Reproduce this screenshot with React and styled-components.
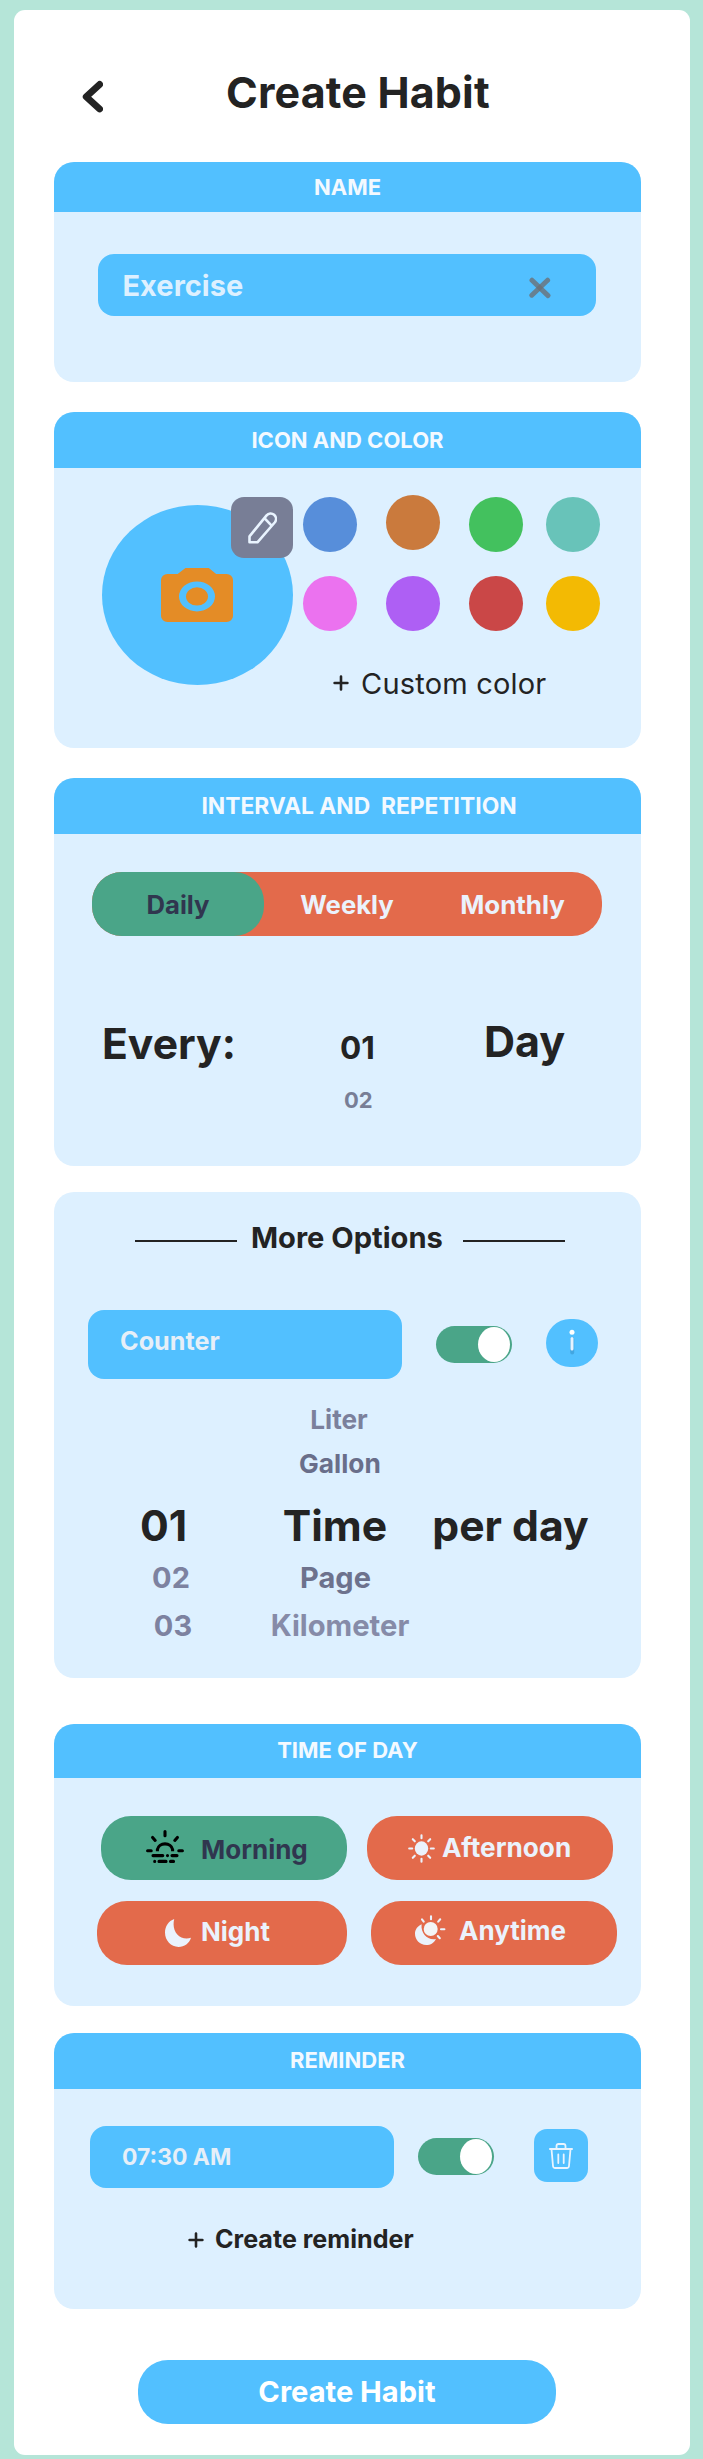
import React from 'react';
import styled, { createGlobalStyle } from 'styled-components';

const c = {
  mint: '#b5e5d8',
  blue: '#52c0ff',
  pale: '#ddf0ff',
  ink: '#232323',
  green: '#4aa588',
  coral: '#e36a4b',
  snow: '#ebf2fc',
  navy: '#30364f',
  slate: '#787e96',
};

const GlobalStyle = createGlobalStyle`
  *, *::before, *::after { box-sizing: border-box; }
  body {
    margin: 0;
    background: ${c.mint};
    color: ${c.ink};
    font-family: Inter, "Liberation Sans", sans-serif;
  }
  button { font: inherit; border: 0; padding: 0; background: none; color: inherit; }
  svg { display: block; flex: none; }
`;

const Page = styled.div`
  padding: 10px 13px 4px 14px;
  background: ${c.mint};
`;

const Panel = styled.main`
  height: 2445px;
  padding: 0 49px 0 40px;
  background: #fff;
  border-radius: 11px;
`;

const TopBar = styled.header`
  height: 152px;
  padding: 62px 0 0 27px;
  display: flex;
  align-items: flex-start;
`;

const BackButton = styled.button`
  margin-top: 8px;
`;

const Text = styled.span`
  display: block;
  white-space: pre;
  line-height: 1;
  font-size: ${(p) => p.$size}px;
  font-weight: ${(p) => p.$weight || 700};
  color: ${(p) => p.$color || 'inherit'};
  letter-spacing: ${(p) => p.$track || 0}px;
  margin-left: ${(p) => p.$ml || 0}px;
  margin-top: ${(p) => p.$mt || 0}px;
`;

const Title = styled.h1`
  margin: 0 0 0 123px;
  line-height: 41px;
  font-size: 43px;
  font-weight: 700;
  white-space: nowrap;
  letter-spacing: 0.15px;
`;

const Card = styled.section`
  height: ${(p) => p.$height}px;
  margin-top: ${(p) => p.$gap || 0}px;
  background: ${c.pale};
  border-radius: 20px;
  overflow: hidden;
`;

const CardHeader = styled.h2`
  margin: 0;
  height: ${(p) => p.$height}px;
  padding: 0 0 ${(p) => p.$lift || 0}px ${(p) => p.$shift || 0}px;
  display: flex;
  align-items: center;
  justify-content: center;
  background: ${c.blue};
  color: #f3f9ff;
  font-size: ${(p) => p.$size || 22}px;
  font-weight: 700;
  white-space: pre;
`;

const Field = styled.div`
  flex: none;
  width: ${(p) => p.$width}px;
  height: ${(p) => p.$height}px;
  padding: 0 ${(p) => p.$right || 0}px ${(p) => p.$lift || 0}px ${(p) => p.$left}px;
  display: flex;
  align-items: center;
  justify-content: space-between;
  background: ${c.blue};
  border-radius: 16px;
`;

const NameBody = styled.div`
  padding: 42px 0 0 44px;
`;

const IconBody = styled.div`
  display: flex;
  padding-left: 48px;
`;

const Avatar = styled.div`
  position: relative;
  flex: none;
  width: 191px;
  height: 180px;
  margin-top: 37px;
  padding-left: 59px;
  padding-top: 63px;
  border-radius: 50%;
  background: ${c.blue};
`;

const EditBadge = styled.button`
  position: absolute;
  top: -8px;
  right: 0;
  width: 62px;
  height: 61px;
  display: flex;
  align-items: center;
  justify-content: center;
  border-radius: 13px;
  background: ${c.slate};
`;

const Palette = styled.div`
  margin: 29px 0 0 10px;
`;

const SwatchRow = styled.div`
  display: grid;
  grid-template-columns: 83px 83px 77px 54px;
  margin-bottom: 24px;
`;

const Swatch = styled.button`
  width: 54px;
  height: 55px;
  border-radius: 50%;
  background: ${(p) => p.$color};
  margin-top: ${(p) => (p.$raised ? -2 : 0)}px;
`;

const AddLink = styled.button`
  display: flex;
  align-items: center;
  height: 30px;
  margin: ${(p) => p.$margin};
`;

const Segments = styled.div`
  display: flex;
  width: 510px;
  height: 64px;
  margin: 38px 0 0 38px;
  border-radius: 30px;
  background: ${c.coral};
  color: ${c.snow};
`;

const Segment = styled.button`
  width: ${(p) => p.$width}px;
  height: 64px;
  padding-top: 2px;
  display: flex;
  align-items: center;
  justify-content: center;
  border-radius: 30px;
  background: ${(p) => (p.$active ? c.green : 'transparent')};
  color: ${(p) => (p.$active ? c.navy : 'inherit')};
`;

const IntervalRow = styled.div`
  display: grid;
  grid-template-columns: 238px 144px 120px;
  align-items: start;
  padding: 86px 0 0 48px;
`;

const NumberWheel = styled.div`
  display: flex;
  flex-direction: column;
`;

const Divider = styled.div`
  display: flex;
  align-items: flex-start;
  padding: 31px 0 0 81px;
`;

const Rule = styled.i`
  display: block;
  width: 102px;
  height: 2px;
  margin-top: 17px;
  background: ${c.ink};
`;

const DividerLabel = styled.h2`
  width: 226px;
  margin: 0;
  padding-left: 14px;
  font-size: 29.1px;
  line-height: 29px;
  font-weight: 700;
  white-space: nowrap;
`;

const ControlRow = styled.div`
  display: flex;
  align-items: flex-start;
  padding: ${(p) => p.$padding};
`;

const Toggle = styled.button`
  flex: none;
  width: 76px;
  height: 37px;
  margin: ${(p) => p.$margin};
  padding: 1px 2px;
  display: flex;
  justify-content: flex-end;
  border-radius: 18.5px;
  background: ${c.green};
`;

const Knob = styled.span`
  width: 32px;
  height: 35px;
  border-radius: 50%;
  background: #fff;
`;

const InfoButton = styled.button`
  display: flex;
  align-items: center;
  justify-content: center;
  width: 52px;
  height: 48px;
  margin: 9px 0 0 34px;
  border-radius: 24px;
  background: ${c.blue};
`;

const Picker = styled.div`
  display: grid;
  grid-template-columns: 166px 167px 179px;
  grid-template-rows: 44px 44px 81px 21px 75px;
  padding: 19px 0 0 34px;
`;

const PickerCell = styled.div`
  display: flex;
  align-items: center;
  justify-content: center;
`;

const TimeGrid = styled.div`
  padding: 38px 0 0 43px;
`;

const TimeRow = styled.div`
  display: flex;
  gap: ${(p) => p.$gap}px;
  margin: 0 0 21px ${(p) => p.$ml || 0}px;
`;

const TimeButton = styled.button`
  display: flex;
  align-items: flex-start;
  width: ${(p) => p.$width || 246}px;
  height: 64px;
  padding-left: ${(p) => p.$left}px;
  border-radius: 30px;
  background: ${(p) => (p.$active ? c.green : c.coral)};
  color: ${(p) => (p.$active ? c.navy : c.snow)};
`;

const IconSlot = styled.span`
  display: block;
  margin-top: ${(p) => p.$top}px;
`;

const DeleteButton = styled.button`
  display: flex;
  align-items: center;
  justify-content: center;
  width: 54px;
  height: 53px;
  margin: 3px 0 0 40px;
  border-radius: 13px;
  background: ${c.blue};
`;

const SubmitButton = styled.button`
  display: flex;
  align-items: center;
  justify-content: center;
  width: 418px;
  height: 64px;
  margin: 51px 0 0 84px;
  padding-bottom: 1px;
  border-radius: 30px;
  background: ${c.blue};
  color: #fff;
`;

const BackIcon = () => (
  <svg width="22" height="33" viewBox="0 0 22 33" fill="none" stroke={c.ink} strokeWidth="6.8" strokeLinecap="round" strokeLinejoin="round">
    <path d="M18.6 4.4 5.2 16.8 18.6 29" />
  </svg>
);

const ClearIcon = () => (
  <svg width="22" height="22" viewBox="0 0 22 22" fill="none" strokeWidth="5" strokeLinecap="round">
    <path d="M3 3.2 19 18.6" stroke="#6b6f74" strokeOpacity=".78" />
    <path d="M18.6 3.2 2.8 18.2" stroke="#6b6f74" strokeOpacity=".78" />
  </svg>
);

const CameraIcon = () => (
  <svg width="72" height="54" viewBox="0 0 72 54">
    <path
      fill="#e48c26"
      fillRule="evenodd"
      d="M24.5 0h23.3L55.2 6H65.6A6.4 6 0 0 1 72 12v36a6.4 6 0 0 1-6.4 6H6.4A6.4 6 0 0 1 0 48V12A6.4 6 0 0 1 6.4 6H16.6ZM36 13.4a18 15 0 1 0 0 30 18 15 0 1 0 0-30Z"
    />
    <ellipse cx="36" cy="28.4" rx="11" ry="9.2" fill="#e48c26" />
  </svg>
);

const PencilIcon = () => (
  <svg width="29" height="32" viewBox="0 0 29 32" fill="none" stroke="#e9f4ff" strokeWidth="2.6" strokeLinejoin="round">
    <path d="M1.5 30.3V24.4L18.6 3.4a5.3 5.3 0 0 1 7.5-.6 5.6 5.6 0 0 1 .6 7.7L9.4 30.3Z" />
    <path d="M16.4 6.2 23.6 13.6" />
  </svg>
);

const PlusIcon = () => (
  <svg width="16" height="16" viewBox="0 0 16 16" fill="none" stroke={c.ink} strokeWidth="2.6" strokeLinecap="round">
    <path d="M8 1.6v12.8M1.6 8h12.8" />
  </svg>
);

const InfoIcon = () => (
  <svg width="12" height="30" viewBox="0 0 12 30">
    <path d="M6.2 11v13.4" stroke="#2a7fb5" strokeOpacity=".4" strokeWidth="4" strokeLinecap="round" />
    <circle cx="6" cy="4.2" r="2.5" fill="#fff" />
    <path d="M6 10.6v10.4" stroke="#e8f3ff" strokeWidth="3" strokeLinecap="round" />
  </svg>
);

const SunriseIcon = () => (
  <svg width="38" height="34" viewBox="0 0 38 34" fill="none" stroke="#000" strokeWidth="3.1" strokeLinecap="round">
    <path d="M19 1.6v4.2M6.6 7.4l2.6 3M31.4 7.4l-2.6 3M1.6 20.7h3.6M32.8 20.7h3.6" />
    <path d="M11.4 21.3v-1.8a7.7 6.7 0 0 1 15.2 0v1.8" strokeLinecap="butt" />
    <path d="M7 25.6h9.8M21.5 25.6h.01M26 25.6h5M8.7 31.4h.01M13 31.4h7M24.5 31.4h3" />
  </svg>
);

const SunIcon = () => (
  <svg width="27" height="29" viewBox="0 0 27 29" stroke={c.snow} strokeWidth="2.1" strokeLinecap="round">
    <ellipse cx="13.5" cy="14.5" rx="6.7" ry="7.2" fill={c.snow} stroke="none" />
    <path d="M13.5 1.2v3M13.5 24.8v3M1.2 14.5h3M22.8 14.5h3M4.8 5.2l2 2.1M20.2 21.7l2 2.1M22.2 5.2l-2 2.1M6.8 21.7l-2 2.1" />
  </svg>
);

const MoonIcon = () => (
  <svg width="26" height="28" viewBox="0 0 26 28">
    <path fill={c.snow} d="M9.2 0C3.6 2 0 7.4 0 13.6 0 21.6 6 28 13.5 28c5.9 0 10.9-3.7 12.5-9.2-1.4.5-2.9.7-4.4.7C14.3 19.5 8.6 13.4 8.6 5.5 8.6 3.5 8.7 1.7 9.2 0Z" />
  </svg>
);

const SunMoonIcon = () => (
  <svg width="31" height="30" viewBox="0 0 31 30">
    <path fill={c.snow} d="M6.6 9.2C2.6 11 0 14.5 0 18.8 0 25 5 30 11.2 30c4.4 0 8-2.3 9.8-6.1C13 25.6 5.6 19 6.6 9.2Z" />
    <circle cx="15.7" cy="14" r="7" fill="#f3f4f6" />
    <path d="M16 1.2v3M7 4.3l1.7 2.3M25.2 4.3l-2 2.3M26 14.3h3.4M22.8 21l2 2.2" stroke={c.snow} strokeWidth="2.1" strokeLinecap="round" />
  </svg>
);

const TrashIcon = () => (
  <svg width="24" height="26" viewBox="0 0 24 26" fill="none" stroke="#e9f4ff" strokeWidth="1.8" strokeLinecap="round" strokeLinejoin="round">
    <path d="M.9 6h22.2M7.5 5.8V3q0-2 2-2h5q2 0 2 2v2.8M2.5 6.2 4 23q.2 2 2.2 2h11.6q2 0 2.2-2L21.5 6.2M9.3 11.4v8.6M14.7 11.4v8.6" />
  </svg>
);

const swatches = [
  ['#578eda', '#ca7a3d', '#43c15e', '#68c3b9'],
  ['#eb72ef', '#ae5ff4', '#ca4747', '#f3ba03'],
];

export default function App() {
  return (
    <>
      <GlobalStyle />
      <Page>
        <Panel>
          <TopBar>
            <BackButton aria-label="Back"><BackIcon /></BackButton>
            <Title>Create Habit</Title>
          </TopBar>

          <Card $height={220}>
            <CardHeader $height={50}>NAME</CardHeader>
            <NameBody>
              <Field $width={498} $height={62} $left={24} $right={45}>
                <Text $size={29} $mt={1} $ml={0.5} $color="#ddf0ff">Exercise</Text>
                <IconSlot $top={5}><ClearIcon /></IconSlot>
              </Field>
            </NameBody>
          </Card>

          <Card $height={336} $gap={30}>
            <CardHeader $height={56}>ICON AND COLOR</CardHeader>
            <IconBody>
              <Avatar>
                <CameraIcon />
                <EditBadge aria-label="Edit icon"><PencilIcon /></EditBadge>
              </Avatar>
              <Palette>
                {swatches.map((row, r) => (
                  <SwatchRow key={r}>
                    {row.map((color, i) => (
                      <Swatch key={color} $color={color} $raised={r === 0 && i === 1} aria-label={color} />
                    ))}
                  </SwatchRow>
                ))}
                <AddLink $margin="37px 0 0 30px">
                  <PlusIcon />
                  <Text $size={29} $weight={400} $track={0.2} $ml={12} $mt={1}>Custom color</Text>
                </AddLink>
              </Palette>
            </IconBody>
          </Card>

          <Card $height={388} $gap={30}>
            <CardHeader $height={56} $shift={23} $size={22.8} $lift={1}>{'INTERVAL AND  REPETITION'}</CardHeader>
            <Segments>
              <Segment $width={172} $active><Text $size={25.7}>Daily</Text></Segment>
              <Segment $width={166}><Text $size={25.7}>Weekly</Text></Segment>
              <Segment $width={165}><Text $size={25.9}>Monthly</Text></Segment>
            </Segments>
            <IntervalRow>
              <Text $size={42.6} $mt={1}>Every:</Text>
              <NumberWheel>
                <Text $size={31.5} $mt={10}>01</Text>
                <Text $size={22} $color={c.slate} $ml={4} $mt={25}>02</Text>
              </NumberWheel>
              <Text $size={43} $mt={-2}>Day</Text>
            </IntervalRow>
          </Card>

          <Card $height={486} $gap={26}>
            <Divider>
              <Rule />
              <DividerLabel>More Options</DividerLabel>
              <Rule />
            </Divider>
            <ControlRow $padding="58px 0 0 34px">
              <Field $width={314} $height={69} $left={32} $lift={5}>
                <Text $size={25.2} $color="#e6eff8">Counter</Text>
              </Field>
              <Toggle $margin="16px 0 0 34px" aria-label="Counter enabled"><Knob /></Toggle>
              <InfoButton aria-label="Information"><InfoIcon /></InfoButton>
            </ControlRow>
            <Picker>
              <PickerCell />
              <PickerCell><Text $size={26.2} $color="#7b809c" $ml={3}>Liter</Text></PickerCell>
              <PickerCell />
              <PickerCell />
              <PickerCell><Text $size={26.3} $color="#696e8a" $ml={5}>Gallon</Text></PickerCell>
              <PickerCell />
              <PickerCell><Text $size={42.7} $ml={-15}>01</Text></PickerCell>
              <PickerCell><Text $size={42.7} $ml={-5}>Time</Text></PickerCell>
              <PickerCell><Text $size={42.7}>per day</Text></PickerCell>
              <PickerCell><Text $size={29} $color="#7d82a0">02</Text></PickerCell>
              <PickerCell><Text $size={29} $color="#6d728d" $ml={-4}>Page</Text></PickerCell>
              <PickerCell />
              <PickerCell><Text $size={29} $color="#7d82a0" $ml={4}>03</Text></PickerCell>
              <PickerCell><Text $size={29.2} $color="#868ba8" $ml={5}>Kilometer</Text></PickerCell>
            </Picker>
          </Card>

          <Card $height={282} $gap={46}>
            <CardHeader $height={54} $lift={2}>TIME OF DAY</CardHeader>
            <TimeGrid>
              <TimeRow $gap={20} $ml={4}>
                <TimeButton $left={45} $active>
                  <IconSlot $top={14}><SunriseIcon /></IconSlot>
                  <Text $size={26} $ml={17} $mt={21}>Morning</Text>
                </TimeButton>
                <TimeButton $left={41}>
                  <IconSlot $top={18}><SunIcon /></IconSlot>
                  <Text $size={26.2} $ml={7} $mt={19}>Afternoon</Text>
                </TimeButton>
              </TimeRow>
              <TimeRow $gap={24}>
                <TimeButton $width={250} $left={68}>
                  <IconSlot $top={18}><MoonIcon /></IconSlot>
                  <Text $size={26} $ml={10} $mt={18}>Night</Text>
                </TimeButton>
                <TimeButton $left={44}>
                  <IconSlot $top={14}><SunMoonIcon /></IconSlot>
                  <Text $size={26} $ml={13} $mt={17}>Anytime</Text>
                </TimeButton>
              </TimeRow>
            </TimeGrid>
          </Card>

          <Card $height={276} $gap={27}>
            <CardHeader $height={56} $lift={2}>REMINDER</CardHeader>
            <ControlRow $padding="37px 0 0 36px">
              <Field $width={304} $height={62} $left={32}>
                <Text $size={22.9} $color="#e6eff8">07:30 AM</Text>
              </Field>
              <Toggle $margin="12px 0 0 24px" aria-label="Reminder enabled"><Knob /></Toggle>
              <DeleteButton aria-label="Delete reminder"><TrashIcon /></DeleteButton>
            </ControlRow>
            <AddLink $margin="37px 0 0 134px">
              <PlusIcon />
              <Text $size={25.1} $ml={11}>Create reminder</Text>
            </AddLink>
          </Card>

          <SubmitButton>
            <Text $size={29.1}>Create Habit</Text>
          </SubmitButton>
        </Panel>
      </Page>
    </>
  );
}
